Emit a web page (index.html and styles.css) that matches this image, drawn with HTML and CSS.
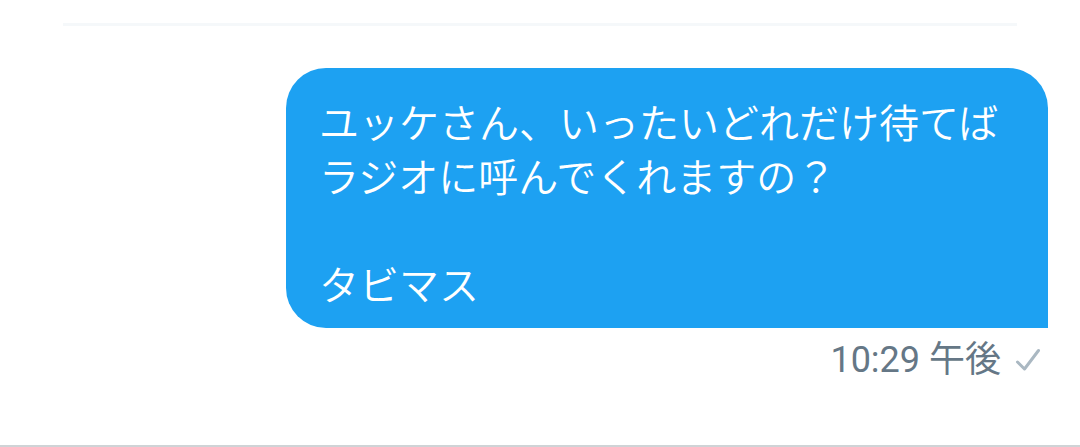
FILE: index.html
```html
<!DOCTYPE html>
<html lang="ja">
<head>
<meta charset="utf-8">
<link rel="stylesheet" href="styles.css">
</head>
<body>
<div class="page">
  <div class="divider"></div>
  <div class="bubble">ユッケさん、いったいどれだけ待てば<br>ラジオに呼んでくれますの？<br><br>タビマス</div>
  <div class="meta">
    <span class="time">10:29 午後</span>
    <svg class="check" width="26" height="24" viewBox="0 0 26 24"><path d="M2.5 14 L9.5 21 L23.5 2.5" fill="none" stroke="#aab8c2" stroke-width="3" stroke-linecap="round" stroke-linejoin="round"/></svg>
  </div>
  <div class="bottom"></div>
</div>
</body>
</html>
```
FILE: styles.css
```css
html, body {
  margin: 0;
  padding: 0;
  background: #fff;
}
.page {
  width: 1080px;
  height: 447px;
  display: flex;
  flex-direction: column;
  overflow: hidden;
}
.divider {
  margin: 23px 63px 0 63px;
  height: 3px;
  background: #f5f8fa;
}
.bubble {
  align-self: flex-end;
  margin: 42px 32px 0 0;
  width: 762px;
  box-sizing: border-box;
  padding: 26px 34px 18px 33px;
  background: #1da1f2;
  color: #fff;
  border-radius: 40px 40px 0 40px;
  font-family: "Noto Sans CJK JP", "Noto Sans", sans-serif;
  font-size: 40px;
  font-weight: 350;
  line-height: 54px;
}
.meta {
  align-self: flex-end;
  margin: 12px 39px 0 0;
  display: flex;
  align-items: center;
  gap: 14px;
  color: #657786;
  font-family: Roboto, "Noto Sans CJK JP", sans-serif;
  font-size: 36px;
  line-height: 40px;
}
.check {
  display: block;
}
.bottom {
  margin-top: auto;
  height: 2px;
  background: #cfd3d6;
}
```
